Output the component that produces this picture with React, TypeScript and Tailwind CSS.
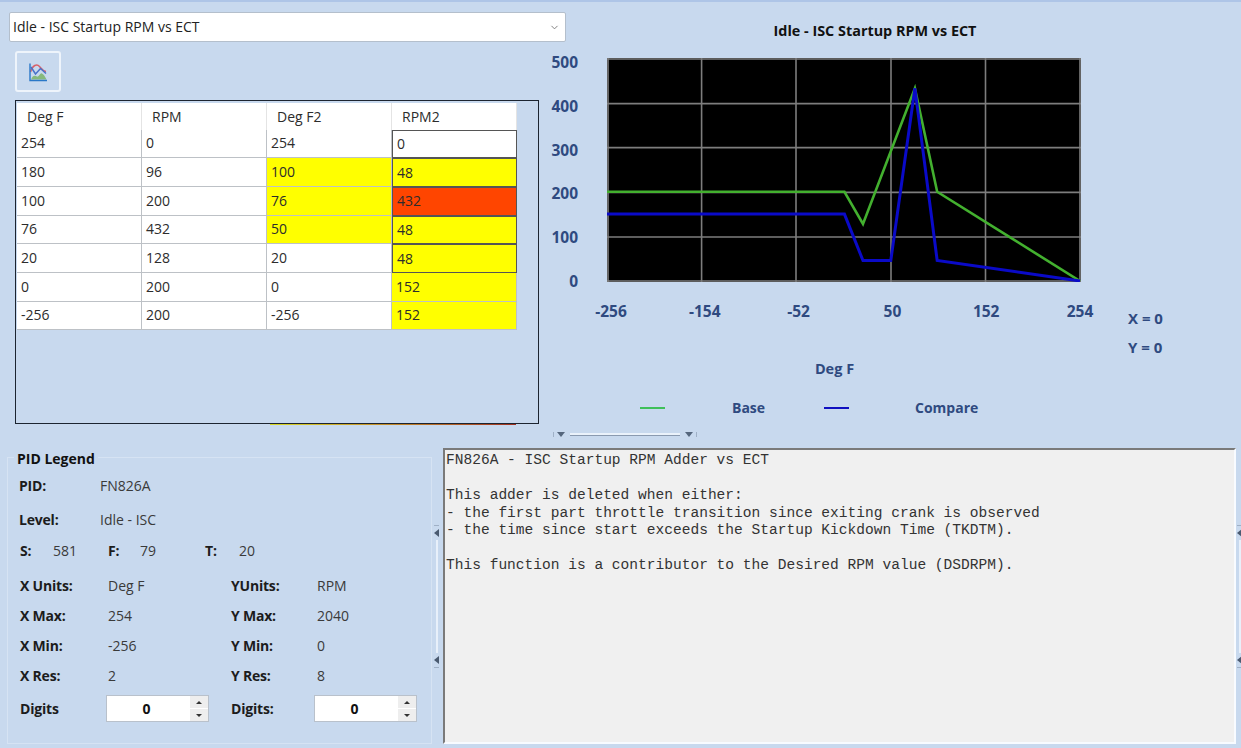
import { ChevronDown } from "lucide-react";

const font = { sans: "font-['Open_Sans','Noto_Sans',sans-serif]" };

type Cell = { text: string; tone?: "yellow" | "red"; dark?: boolean };

const rows: Cell[][] = [
  [{ text: "254" }, { text: "0" }, { text: "254" }, { text: "0", dark: true }],
  [{ text: "180" }, { text: "96" }, { text: "100", tone: "yellow" }, { text: "48", tone: "yellow", dark: true }],
  [{ text: "100" }, { text: "200" }, { text: "76", tone: "yellow" }, { text: "432", tone: "red", dark: true }],
  [{ text: "76" }, { text: "432" }, { text: "50", tone: "yellow" }, { text: "48", tone: "yellow", dark: true }],
  [{ text: "20" }, { text: "128" }, { text: "20" }, { text: "48", tone: "yellow", dark: true }],
  [{ text: "0" }, { text: "200" }, { text: "0" }, { text: "152", tone: "yellow" }],
  [{ text: "-256" }, { text: "200" }, { text: "-256" }, { text: "152", tone: "yellow" }],
];

const description = `FN826A - ISC Startup RPM Adder vs ECT

This adder is deleted when either:
- the first part throttle transition since exiting crank is observed
- the time since start exceeds the Startup Kickdown Time (TKDTM).

This function is a contributor to the Desired RPM value (DSDRPM).`;

function px(x: number) {
  return ((x + 256) / 510) * 473;
}
function py(y: number) {
  return 223 - (y / 500) * 223;
}
function line(points: number[][]) {
  return points.map(([x, y]) => `${px(x)},${py(y)}`).join(" ");
}

const green = [[-256, 200], [0, 200], [20, 128], [76, 432], [100, 200], [180, 96], [254, 0]];
const blue = [[-256, 150], [0, 150], [20, 46], [50, 46], [76, 432], [100, 46], [254, 0]];

function Plot() {
  return (
    <svg width="474" height="224" viewBox="0 0 474 224" className="block shrink-0 bg-black">
      {[1, 94.6, 189, 284, 378.5, 473].map((x) => (
        <line key={x} x1={x} x2={x} y1="0" y2="224" stroke="#7d7d7d" strokeWidth="1.6" />
      ))}
      {[1, 45.6, 89.6, 134.4, 179, 223].map((y) => (
        <line key={y} x1="0" x2="474" y1={y} y2={y} stroke="#7d7d7d" strokeWidth="1.6" />
      ))}
      <polyline points={line(green)} fill="none" stroke="#43b02f" strokeWidth="2.6" />
      <polyline points={line(blue)} fill="none" stroke="#0a0ac8" strokeWidth="3" />
    </svg>
  );
}

function ChartIcon() {
  return (
    <svg width="20" height="20" viewBox="0 0 20 20" fill="none">
      <path d="M2.5 10C4.5 3 9 1.5 11.5 4.5S15 9 18 9.5" stroke="#d8606a" strokeWidth="1.5" />
      <path d="M3 5l4.5 7 5-5.5 5.5 5" stroke="#4a72c8" strokeWidth="1.5" />
      <path d="M3 17.5c2-5 4-4 6-3s3-4 5-3 3 3 4.5 6z" fill="#86b97c" />
      <path d="M2 1.5v17h17" stroke="#2a78c8" strokeWidth="1.4" />
    </svg>
  );
}

function Tri({ dir }: { dir: "left" | "down" | "up" }) {
  const points = dir === "left" ? "5,0 5,8 0,4" : dir === "down" ? "0,0 8,0 4,5" : "0,5 8,5 4,0";
  const size = dir === "left" ? { width: 5, height: 8 } : { width: 8, height: 5 };
  return (
    <svg {...size} viewBox={`0 0 ${size.width} ${size.height}`} className="block shrink-0">
      <polygon points={points} fill="currentColor" />
    </svg>
  );
}

function DataGrid() {
  return (
    <div className="relative h-[324px] w-[524px] border-[1.5px] border-[#1c2430] pl-px pt-[1.5px]">
      <div className="grid w-[500px] grid-cols-4 bg-white text-[14px] leading-none text-[#2c2c2c]">
        {["Deg F", "RPM", "Deg F2", "RPM2"].map((h) => (
          <div key={h} className="flex h-[27px] items-center border-r border-[#e4e4e4] pl-[10px] pt-[2px]">
            {h}
          </div>
        ))}
      </div>
      {rows.map((row, i) => (
        <div key={i} className="grid h-[28.7px] w-[500px] grid-cols-4 text-[14px] leading-none text-[#2c2c2c]">
          {row.map((c, j) => (
            <div
              key={j}
              className={`flex items-center pl-[4px] ${
                c.tone === "yellow" ? "bg-[#ffff00]" : c.tone === "red" ? "bg-[#ff4500]" : "bg-white"
              } ${
                c.dark
                  ? "border border-[#555555]"
                  : "border-b border-r border-t-0 border-b-[#bdc1c6] border-r-[#bdc1c6]"
              }`}
            >
              {c.text}
            </div>
          ))}
        </div>
      ))}
    </div>
  );
}

function Label({ children, className = "" }: { children: string; className?: string }) {
  return <span className={`font-bold tracking-[-0.2px] text-[#1c1c1c] ${className}`}>{children}</span>;
}

function Value({ children, className = "" }: { children: string; className?: string }) {
  return <span className={`text-[#3a3a3a] ${className}`}>{children}</span>;
}

function Pair({ a, b, c, d }: { a: string; b: string; c: string; d: string }) {
  return (
    <div className="flex h-[30px] items-center pl-[12px]">
      <Label className="w-[88px]">{a}</Label>
      <Value className="w-[123px]">{b}</Value>
      <Label className="w-[86px]">{c}</Label>
      <Value>{d}</Value>
    </div>
  );
}

function Spin() {
  return (
    <div className="flex h-[27px] w-[103px] border border-[#b9c1cb] bg-white">
      <div className="flex flex-1 items-center justify-center pr-[2px] font-bold text-[#111111]">0</div>
      <div className="flex w-[20px] flex-col gap-px border-l-2 border-white bg-white text-[#333333]">
        <div className="flex flex-1 items-center justify-center bg-[#eeeeee]">
          <svg width="6" height="3" viewBox="0 0 6 3" className="block"><polygon points="0,3 6,3 3,0" fill="currentColor" /></svg>
        </div>
        <div className="flex flex-1 items-center justify-center bg-[#eeeeee]">
          <svg width="6" height="3" viewBox="0 0 6 3" className="block"><polygon points="0,0 6,0 3,3" fill="currentColor" /></svg>
        </div>
      </div>
    </div>
  );
}

function Legend() {
  return (
    <fieldset className="ml-[7px] h-[296px] w-[425px] shrink-0 border border-[#d6e3f3] text-[14px] leading-none">
      <legend className="ml-[6px] px-[3px] pt-[4px] font-bold text-[#111111]">PID Legend</legend>
      <div className="mt-[10px] flex h-[20px] items-center pl-[11px]">
        <Label className="w-[81px]">PID:</Label>
        <Value>FN826A</Value>
      </div>
      <div className="mt-[14px] flex h-[20px] items-center pl-[11px]">
        <Label className="w-[81px]">Level:</Label>
        <Value>Idle - ISC</Value>
      </div>
      <div className="mt-[11px] flex h-[20px] items-center pl-[12px]">
        <Label className="w-[33px]">S:</Label>
        <Value className="w-[55px]">581</Value>
        <Label className="w-[32px]">F:</Label>
        <Value className="w-[65px]">79</Value>
        <Label className="w-[34px]">T:</Label>
        <Value>20</Value>
      </div>
      <div className="mt-[10px]">
        <Pair a="X Units:" b="Deg F" c="YUnits:" d="RPM" />
        <Pair a="X Max:" b="254" c="Y Max:" d="2040" />
        <Pair a="X Min:" b="-256" c="Y Min:" d="0" />
        <Pair a="X Res:" b="2" c="Y Res:" d="8" />
      </div>
      <div className="mt-[4px] flex items-center pl-[12px]">
        <Label className="w-[86px]">Digits</Label>
        <Spin />
        <Label className="ml-[22px] w-[83px]">Digits:</Label>
        <Spin />
      </div>
    </fieldset>
  );
}

function VSplit() {
  return (
    <div className="flex w-[5px] shrink-0 flex-col items-center gap-[3px] text-[#4a5a70]">
      <div className="h-px w-[5px] bg-[#9fb0c6]" />
      <Tri dir="left" />
      <div className="h-[113px] w-[2px] bg-[#e8f0fa]" />
      <Tri dir="left" />
      <div className="h-px w-[5px] bg-[#9fb0c6]" />
    </div>
  );
}

export default function App() {
  return (
    <div className={`flex h-[748px] w-[1241px] flex-col overflow-hidden border-t-2 border-[#aec5e7] bg-[#c8d9ee] ${font.sans}`}>
      <div className="flex h-[428px] shrink-0">
        <div className="w-[541px] shrink-0 pt-[10px]">
          <div className="relative ml-[9px] flex h-[30px] w-[557px] items-center justify-between rounded-[2px] border border-[#b4bfcc] bg-white pl-[3px] pr-[5px] text-[14px] leading-none text-[#222222]">
            <span>Idle - ISC Startup RPM vs ECT</span>
            <ChevronDown size={11} className="text-[#777777]" />
          </div>
          <div className="ml-[15px] mt-[9px] flex h-[41px] w-[46px] items-center justify-center rounded-[3px] border-2 border-[#eef4fb]">
            <ChartIcon />
          </div>
          <div className="ml-[15px] mt-[8px]">
            <DataGrid />
          </div>
          <div className="ml-[270px] h-px w-[246px] bg-gradient-to-r from-[#d8d820] to-[#a03020]" />
        </div>
        <div className="flex-1">
          <div className="h-[50px] pr-[32px] pt-[19px] text-center text-[14.4px] font-bold leading-[20px] text-[#111111]">
            Idle - ISC Startup RPM vs ECT
          </div>
          <div className="flex">
            <div className="flex h-[239px] w-[37px] flex-col justify-between text-right text-[15.5px] font-bold leading-[20px] text-[#2f4a80]">
              {["500", "400", "300", "200", "100", "0"].map((n) => (
                <span key={n}>{n}</span>
              ))}
            </div>
            <div className="ml-[29px] mt-[6px]">
              <Plot />
            </div>
          </div>
          <div className="flex">
            <div className="ml-[40px] w-[529px] shrink-0">
              <div className="mt-[10px] flex justify-between text-center text-[15.5px] font-bold leading-[20px] text-[#2f4a80]">
                {["-256", "-154", "-52", "50", "152", "254"].map((n) => (
                  <span key={n} className="w-[60px]">
                    {n}
                  </span>
                ))}
              </div>
              <div className="mt-[38px] pr-[22px] text-center text-[14.5px] font-bold leading-[20px] text-[#2f4a80]">
                Deg F
              </div>
            </div>
            <div className="ml-[18px] mt-[17px] flex flex-col gap-[9px] text-[15px] font-bold leading-[20px] text-[#2f4a80]">
              <span>X = 0</span>
              <span>Y = 0</span>
            </div>
          </div>
          <div className="mt-[19px] flex items-center pl-[99px] text-[14px] font-bold leading-[20px] text-[#2f4a80]">
            <div className="h-[1.5px] w-[25px] bg-[#3fc05a]" />
            <span className="ml-[67px] w-[92px]">Base</span>
            <div className="h-[1.5px] w-[25px] bg-[#1010c0]" />
            <span className="ml-[66px]">Compare</span>
          </div>
        </div>
      </div>

      <div className="flex h-[18px] shrink-0 items-start pl-[553px] pt-[2px] text-[#55667d]">
        <div className="mr-[3px] h-[5px] w-px bg-[#9fb0c6]" />
        <Tri dir="down" />
        <div className="mx-[5px] mt-[1px] h-[3px] w-[110px] border-b border-[#8a9ab0] bg-[#eaf2fb]" />
        <Tri dir="down" />
        <div className="ml-[3px] h-[5px] w-px bg-[#9fb0c6]" />
      </div>

      <div className="flex flex-1 items-start">
        <Legend />
        <div className="ml-[2px] flex h-[296px] items-center">
          <VSplit />
        </div>
        <pre className="ml-[4px] h-[296px] w-[793px] shrink-0 overflow-hidden border-2 border-b-[#f8fbff] border-l-[#7a7a7a] border-r-[#f8fbff] border-t-[#7a7a7a] bg-[#f0f0f0] pl-[1px] pt-[2px] font-['Liberation_Mono',monospace] text-[14.55px] leading-[17.5px] text-[#333333]">
          {description}
        </pre>
        <div className="ml-[1px] flex h-[296px] items-center">
          <VSplit />
        </div>
      </div>
    </div>
  );
}
